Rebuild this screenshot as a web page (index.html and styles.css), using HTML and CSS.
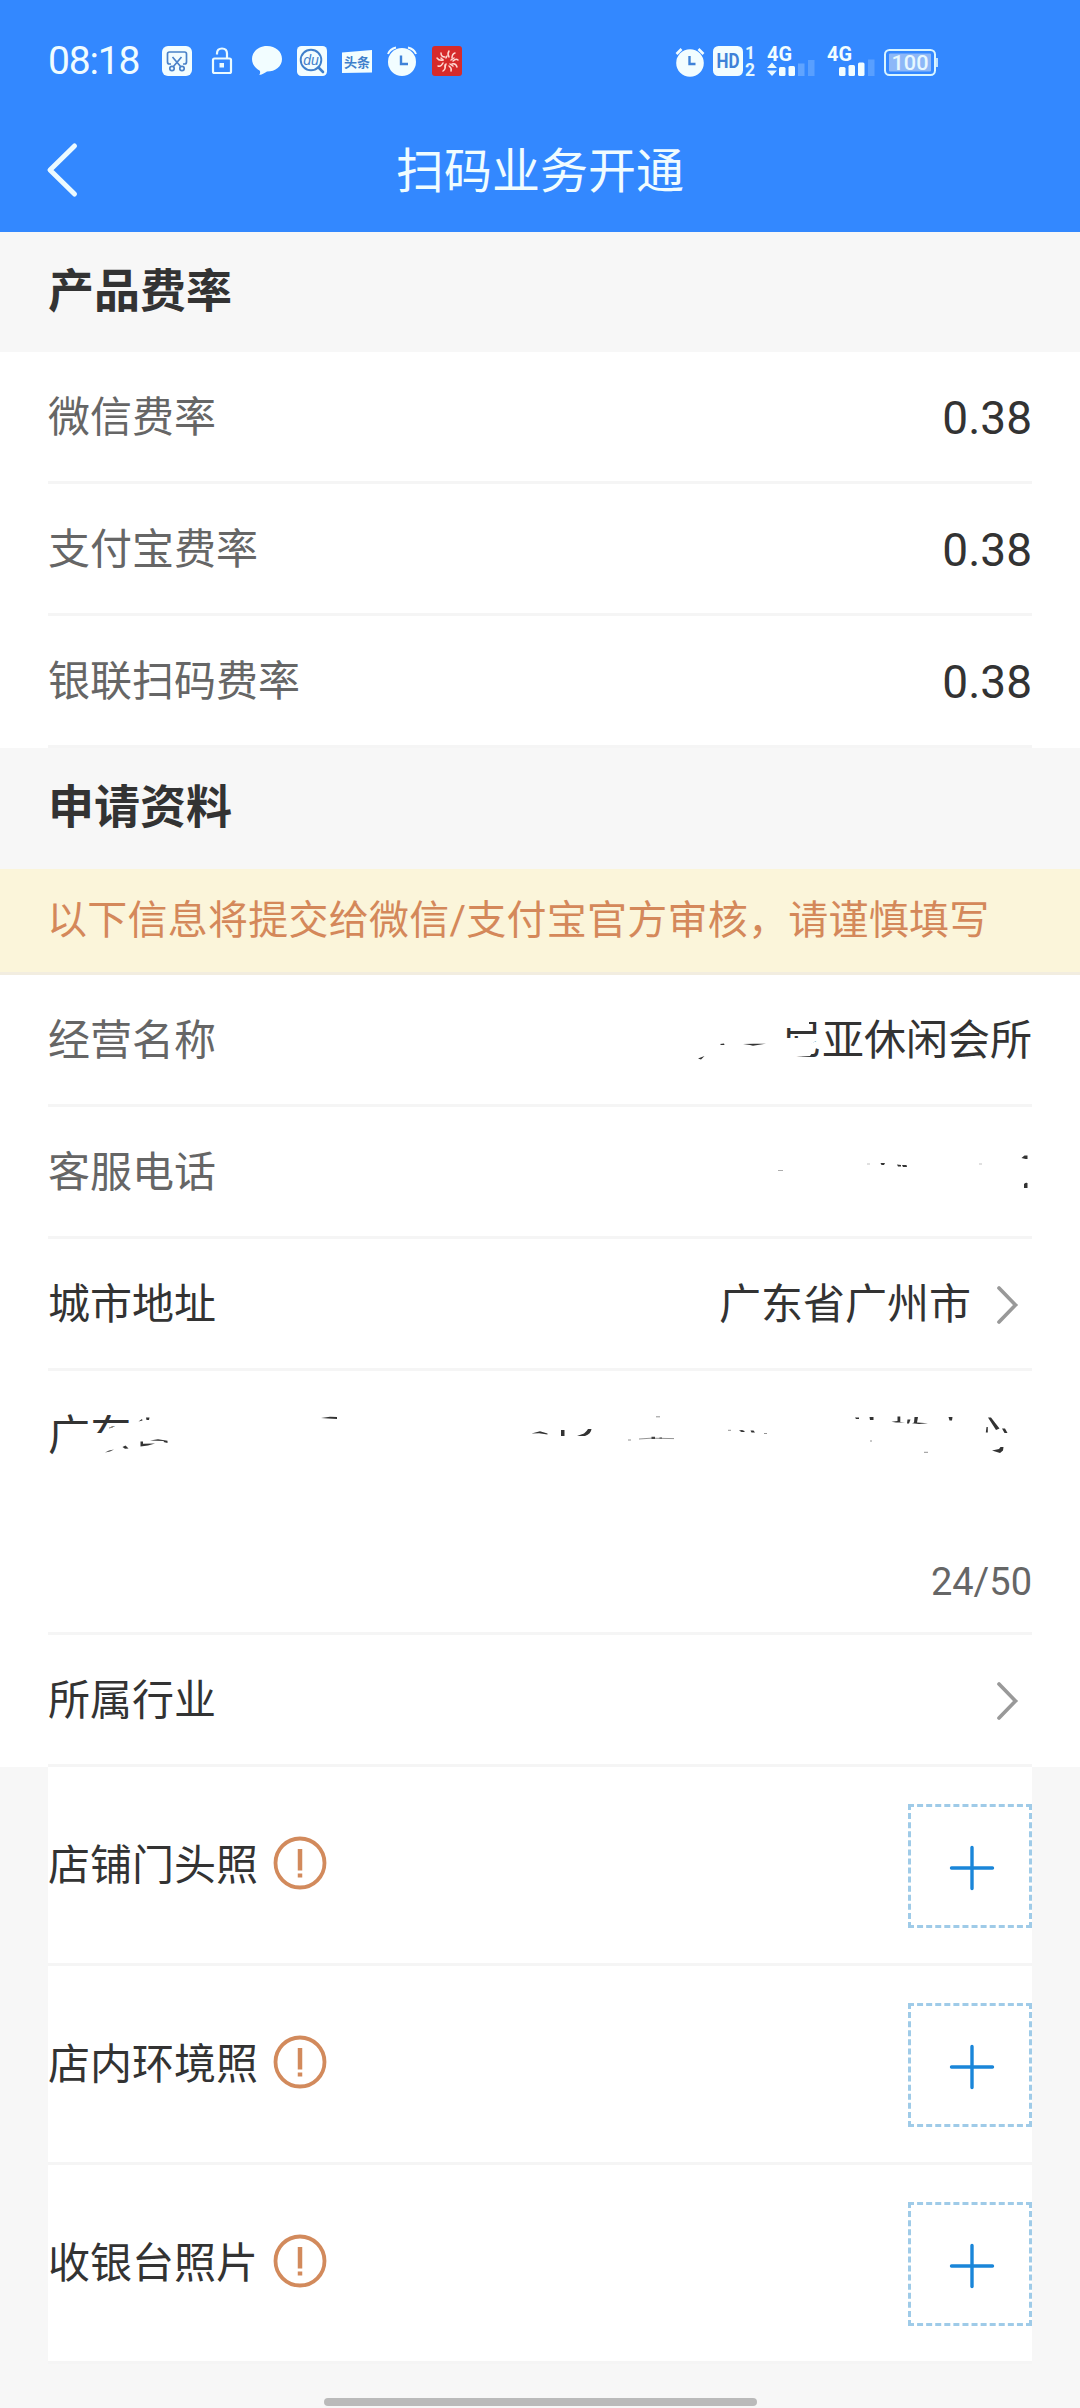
FILE: index.html
```html
<!DOCTYPE html>
<html lang="zh-CN">
<head>
<meta charset="utf-8">
<title>扫码业务开通</title>
<link rel="stylesheet" href="styles.css">
</head>
<body>
<header class="header">
  <div class="status">
    <div class="status-left">
      <span class="time">08:18</span>
      <svg class="ico" viewBox="0 0 30 30"><rect width="30" height="30" rx="6" fill="#f2fdff"/><g fill="none" stroke="#4a82c8" stroke-width="1.7"><path d="M9 18H7.500Q5.500 18 5.500 16V8Q5.500 6 7.500 6H22.500Q24.500 6 24.500 8V16Q24.500 18 22.500 18H21"/><path d="M10.500 11L19 21M19.500 11L11 21"/><circle cx="10" cy="22.500" r="2.200"/><circle cx="20" cy="22.500" r="2.200"/></g></svg>
      <svg class="ico" viewBox="0 0 30 30"><g fill="none" stroke="#eafaff" stroke-width="2.200"><rect x="6" y="12.500" width="18" height="14.500" rx="1.500"/><path d="M10 8.500V7.500Q10 2.500 15 2.500T20 7.500V12"/></g><rect x="12.500" y="17" width="4.500" height="4.500" fill="#eafaff"/></svg>
      <svg class="ico" viewBox="0 0 30 30"><path d="M15 0C6.500 0 0 5.600 0 13c0 5 3 9 7.500 11.500 1 1.200.8 2.700-.2 4.500 3.200-.4 5.700-2 7.700-3.400C23.500 25.500 30 20.500 30 13S23.500 0 15 0z" fill="#f2fdff"/></svg>
      <svg class="ico" viewBox="0 0 30 30"><rect width="30" height="30" rx="4.500" fill="#f2fdff"/><circle cx="14" cy="14" r="10.300" fill="none" stroke="#3f7fcb" stroke-width="1.900"/><path d="M21.500 21.500L26 26" stroke="#3f7fcb" stroke-width="2.600" stroke-linecap="round"/><text x="14" y="18.500" text-anchor="middle" class="du">du</text></svg>
      <svg class="ico" viewBox="0 0 30 30"><path d="M0 6.500L30 4V26.500L0 27z" fill="#f2fdff"/><text x="15" y="20.800" text-anchor="middle" class="tt">头条</text></svg>
      <svg class="ico" viewBox="0 0 30 30"><circle cx="15" cy="16" r="14" fill="#f2fdff"/><path d="M1 8Q3 3 9 1.500M29 8Q27 3 21 1.500" fill="none" stroke="#f2fdff" stroke-width="2"/><path d="M14 9.500V18H21" fill="none" stroke="#3f82d8" stroke-width="2.400"/></svg>
      <svg class="ico" viewBox="0 0 30 30"><rect width="30" height="30" rx="3" fill="#d62b2b"/><g fill="none" stroke="#ffd9d2" stroke-width="1.500" stroke-linecap="round"><path d="M17 11Q15 8 17 5M20 12Q20 8 23 7M21 15Q24 12 26 14M20 18Q24 17 25 21M17 20Q20 22 19 25M13 19Q14 23 11 25M11 17Q9 21 6 20M11 14Q7 15 5 12M13 11Q9 11 9 7"/><path d="M14 12l1-2M19 14l3-2M18 18l3 2M14 18l-1 3M11 14l-2-2"/></g></svg>
    </div>
    <div class="status-right">
      <svg class="ico" viewBox="0 0 30 30"><circle cx="15" cy="17" r="13.800" fill="#f2fdff"/><path d="M1.500 8L6.500 3M28.500 8L23.500 3" stroke="#f2fdff" stroke-width="2.600"/><path d="M14.500 10V18H20.500" fill="none" stroke="#3f82d8" stroke-width="2.400"/></svg>
      <svg class="hd" viewBox="0 0 44 30"><rect width="30" height="30" rx="5.500" fill="#f2fdff"/><text x="15" y="22" text-anchor="middle" class="hd-t" textLength="23" lengthAdjust="spacingAndGlyphs">HD</text><text x="37" y="12.500" text-anchor="middle" class="sim">1</text><text x="37" y="30" text-anchor="middle" class="sim">2</text></svg>
      <svg class="signal" viewBox="0 0 50 30"><text x="0" y="15" class="net" textLength="25" lengthAdjust="spacingAndGlyphs">4G</text><path d="M0 22L5 16.500 10 22zM0 24.500L5 30 10 24.500z" fill="#eafaff"/><g fill="#f2fdff"><rect x="12" y="21" width="6.500" height="9" rx="1.500"/><rect x="21.500" y="20" width="6.500" height="10" rx="1.500"/><rect x="31" y="17.500" width="6.500" height="12.500" opacity=".24"/><rect x="41" y="14" width="6.500" height="16" opacity=".2"/></g></svg>
      <svg class="signal" viewBox="0 0 50 30"><text x="0" y="15" class="net" textLength="25" lengthAdjust="spacingAndGlyphs">4G</text><g fill="#f2fdff"><rect x="12" y="21" width="6.500" height="9" rx="1.500"/><rect x="21.500" y="19" width="6.500" height="11" rx="1.500"/><rect x="31" y="16.500" width="6.500" height="13.500" rx="1.500"/><rect x="41" y="13.500" width="6.500" height="16.500" opacity=".2"/></g></svg>
      <svg class="battery" viewBox="0 0 54 30"><rect x="1" y="4" width="50" height="25" rx="4.500" fill="none" stroke="#d9f5ff" stroke-width="2"/><rect x="5" y="7.500" width="42" height="18" rx="1" fill="#8db8f8"/><path d="M53 12V21" stroke="#bfe2ff" stroke-width="2"/><text x="26" y="23.500" text-anchor="middle" class="pct" textLength="37" lengthAdjust="spacingAndGlyphs">100</text></svg>
    </div>
  </div>
  <div class="nav">
    <svg class="back" viewBox="0 0 32 56"><path d="M27.500 4L3 28 27.500 52" fill="none" stroke="#ecfaff" stroke-width="5" stroke-linecap="round" stroke-linejoin="round"/></svg>
    <h1 class="title">扫码业务开通</h1>
  </div>
</header>
<main>
  <h2 class="section">产品费率</h2>
  <div class="group">
    <div class="row"><span class="label">微信费率</span><span class="rate">0.38</span></div>
    <div class="row"><span class="label">支付宝费率</span><span class="rate">0.38</span></div>
    <div class="row"><span class="label">银联扫码费率</span><span class="rate">0.38</span></div>
  </div>
  <h2 class="section second-section">申请资料</h2>
  <p class="notice">以下信息将提交给微信/支付宝官方审核，请谨慎填写</p>
  <div class="group">
    <div class="row"><span class="label">经营名称</span>
      <span class="value"><svg width="84" height="42" viewBox="0 0 84 42"><g fill="#333"><path d="M2 38.500L8.500 36 5 39.500zM24 24L28 23.500 28.500 25H25z"/><path d="M47 24L58 23.700 70 23.800 60 25.200 57 25.800 54 25z"/></g></svg><span class="partial-ni">尼</span>亚休闲会所</span>
    </div>
    <div class="row"><span class="label">客服电话</span>
      <svg width="260" height="42" viewBox="772 1151 260 42"><g fill="#333"><path d="M778 1169h5v1h-5z" opacity=".4"/><path d="M867 1162.500h3v1h-3zM979 1162.500h3v1h-3z" opacity=".3"/><path d="M880.500 1162h4.500l-1 2h-2.500zM897 1163.500l4 .5v1.500h-3zM902 1164h4.500l.5 2h-4zM1021.500 1157l3-2.500h3v3.500h-2zM1024 1183q2-2 3.500-1v5h-3.500z"/></g></svg>
    </div>
    <div class="row"><span class="label dark">城市地址</span>
      <span class="value">广东省广州市<svg class="chevron" viewBox="0 0 24 40"><path d="M3 3L19.500 20 3 37" fill="none" stroke="#999" stroke-width="3.700" stroke-linecap="round"/></svg></span>
    </div>
    <div class="address">
      <div class="address-text"><span>广</span><span class="partial-dong">东</span><svg width="900" height="42" viewBox="132 1415 900 42">
        <g fill="#333">
          <path d="M138.500 1421.500L142 1419 142.500 1420.500zM146 1417.500h3.500l-.5 2.500h-2.500zM321 1418L330 1416.800 337 1417V1419L328 1418.600zM531.500 1433.500L540 1431.200 547.500 1433.500V1434.500L539 1433.200z"/>
          <path d="M140.500 1441.500h2.500v2.300L155 1443.500 148 1445.500 140.500 1446.500z"/>
          <path d="M150 1440.500L158 1439.300 167.500 1440.700V1443L163.500 1442 164 1441z"/>
          <path d="M561 1430h3.500v6h-3.500zM577 1436L584 1433.500Q587 1431 588 1429H591.500Q591 1434 585 1436zM739 1430.500L742 1430 744.500 1431V1432h-3zM750.500 1430.500h3l1.500 2h-3.500zM850 1430"/>
          <path d="M855 1417.500h4v1.500h-3zM869.500 1417h4v3h-3.500zM897.500 1416.500h2.800v5.500L905 1422.500H896L891.500 1421.800 897.500 1421zM907.500 1419.500h3l-1.500 4h-2zM914.500 1417h3.500l-1 5.500 11 .7-9 .8-7-.7 2-.8zM948.500 1417h4l-.5 3.500h-2.500zM988 1417.500L991 1417.500 999.500 1428.500 996 1430zM986.500 1427h1.300v5.500h-2zM1002 1428.500L1005 1428.500 1007.500 1433H1004.500zM992 1450.500L999 1449 1000.500 1447H1003.500L1003 1450.500 1000 1453z"/>
        </g>
        <g fill="none" stroke="#777" stroke-width=".8"><path d="M628 1440H631M639 1439L651 1438.200 674 1438.600M728 1430.300H731M764 1433.500H767M924 1452.300H928M656 1416.800H660M870 1441H872"/></g>
        <path d="M651.500 1436.800h3.500v2.200h-3.500zM659.500 1437.500h2.500v1h-2.500z" fill="#444"/>
        </svg><svg class="trace" width="30" height="42" viewBox="102 1415 30 42"><path d="M105 1452.500L109 1450.500 114 1449.500 110 1451.500z" fill="#444"/><path d="M109 1428L113 1427" stroke="#777"/><path d="M122.500 1447L125.500 1445.500 128.500 1448.500 125 1448.700z" fill="#333"/></svg></div>
      <span class="count">24/50</span>
    </div>
    <div class="row"><span class="label dark">所属行业</span>
      <span class="value"><svg class="chevron" viewBox="0 0 24 40"><path d="M3 3L19.500 20 3 37" fill="none" stroke="#999" stroke-width="3.700" stroke-linecap="round"/></svg></span>
    </div>
  </div>
  <div class="photos">
    <div class="photo"><span class="photo-label">店铺门头照<svg class="tip" viewBox="0 0 54 54"><circle cx="27" cy="27" r="24.500" fill="none" stroke="#d28a5c" stroke-width="3.800"/><path d="M27 13V34.500M27 37.500V41.500" stroke="#d28a5c" stroke-width="4.500"/></svg></span><span class="upload"><svg viewBox="0 0 44 44"><path d="M22 1.500V42.500M1.500 22H42.500" stroke="#1a86d9" stroke-width="3.400" stroke-linecap="round"/></svg></span></div>
    <div class="photo"><span class="photo-label">店内环境照<svg class="tip" viewBox="0 0 54 54"><circle cx="27" cy="27" r="24.500" fill="none" stroke="#d28a5c" stroke-width="3.800"/><path d="M27 13V34.500M27 37.500V41.500" stroke="#d28a5c" stroke-width="4.500"/></svg></span><span class="upload"><svg viewBox="0 0 44 44"><path d="M22 1.500V42.500M1.500 22H42.500" stroke="#1a86d9" stroke-width="3.400" stroke-linecap="round"/></svg></span></div>
    <div class="photo"><span class="photo-label">收银台照片<svg class="tip" viewBox="0 0 54 54"><circle cx="27" cy="27" r="24.500" fill="none" stroke="#d28a5c" stroke-width="3.800"/><path d="M27 13V34.500M27 37.500V41.500" stroke="#d28a5c" stroke-width="4.500"/></svg></span><span class="upload"><svg viewBox="0 0 44 44"><path d="M22 1.500V42.500M1.500 22H42.500" stroke="#1a86d9" stroke-width="3.400" stroke-linecap="round"/></svg></span></div>
  </div>
</main>
<footer class="gesture"><div class="gesture-bar"></div></footer>
</body>
</html>
```

FILE: styles.css
```css
* { box-sizing: border-box; margin: 0; padding: 0; }
body {
  width: 1080px;
  height: 2408px;
  overflow: hidden;
  display: flex;
  flex-direction: column;
  background: #f7f7f7;
  color: #333;
  font-family: Roboto, "Noto Sans CJK SC", sans-serif;
  font-size: 42px;
  line-height: 1;
}
svg { display: block; flex: none; overflow: visible; }

.header { height: 232px; background: #3388ff; color: #f0fcff; }
.status { display: flex; height: 108px; padding: 46px 0 0 48px; }
.status-left { display: flex; gap: 15px; width: 627px; }
.time { width: 99px; height: 30px; line-height: 31px; font-size: 39px; letter-spacing: -1.2px; }
.status-right { display: flex; }
.ico { width: 30px; height: 30px; }
.hd { width: 44px; height: 30px; margin-left: 8px; }
.signal { width: 50px; height: 30px; margin-left: 10px; }
.battery { width: 54px; height: 30px; margin-left: 7px; }
.du { font: italic 14px "Liberation Sans", sans-serif; fill: #3f7fcb; }
.tt { font: 700 13px "Noto Sans CJK SC", sans-serif; fill: #3f7fcb; }
.hd-t { font: 700 20px Roboto, sans-serif; fill: #3f82d8; }
.sim { font: 700 17.5px Roboto, sans-serif; fill: #e6f8ff; }
.net { font: 700 21px Roboto, sans-serif; fill: #f2fdff; }
.pct { font: 500 21px Roboto, sans-serif; fill: #e6f8ff; }

.nav { display: grid; grid-template-columns: 48px 1fr 48px; align-items: center; height: 124px; }
.back { width: 32px; height: 56px; grid-column: 2; grid-row: 1; margin-left: -1px; }
.title { grid-column: 2; grid-row: 1; justify-self: center; padding-top: 3px; font-size: 48px; font-weight: 400; }

.section { height: 120px; padding: 0 48px; font-size: 46px; line-height: 118px; font-weight: 700; }
.second-section { height: 121px; line-height: 119px; }
.group { padding: 0 48px; background: #fff; }
.row { display: flex; align-items: center; justify-content: space-between; height: 132px; padding-top: 3px; border-bottom: 3px solid #f5f5f5; }
.label { color: #666; }
.dark { color: #333; }
.rate { font-size: 46px; }
.notice { height: 106px; padding: 0 47px; border-bottom: 3px solid #f2ede0; background: #fbf5da; color: #d4885a; font-size: 40px; letter-spacing: .25px; line-height: 104px; white-space: nowrap; }
.value { display: flex; align-items: center; }
.chevron { width: 24px; height: 40px; margin: 0 12px 0 25px; }
.partial-ni { clip-path: polygon(5px 8px, 29px 8px, 29px 2px, 42px 2px, 42px 42px, 15px 42px, 15px 37px, 30px 36px, 36px 28px, 28px 26px, 36px 21px, 36px 18px, 5px 18px); }

.address { display: flex; flex-direction: column; justify-content: space-between; height: 264px; padding: 44px 0 31px; border-bottom: 3px solid #f5f5f5; }
.address-text { display: flex; height: 42px; position: relative; }
.partial-dong { clip-path: polygon(0 0, 42px 0, 42px 12px, 22px 12px, 14px 18px, 0 18px); }
.trace { position: absolute; left: 54px; top: 0; }
.count { align-self: flex-end; color: #666; font-size: 38px; }

.photos { margin: 0 48px; background: #fff; }
.photo { display: flex; align-items: center; justify-content: space-between; height: 199px; padding-top: 2px; border-bottom: 3px solid #f5f5f5; }
.photo-label { display: flex; align-items: center; }
.tip { width: 54px; height: 54px; margin: -7px 0 0 15px; }
.upload { display: flex; align-items: center; justify-content: center; width: 124px; height: 124px; border: 3px dashed #9fcbe8; }
.upload svg { width: 44px; height: 44px; margin: 3px 0 0 3px; }

.gesture { display: flex; justify-content: center; align-items: flex-end; flex: 1; padding-bottom: 2px; }
.gesture-bar { width: 433px; height: 8px; border-radius: 4px; background: #bababa; }
```
